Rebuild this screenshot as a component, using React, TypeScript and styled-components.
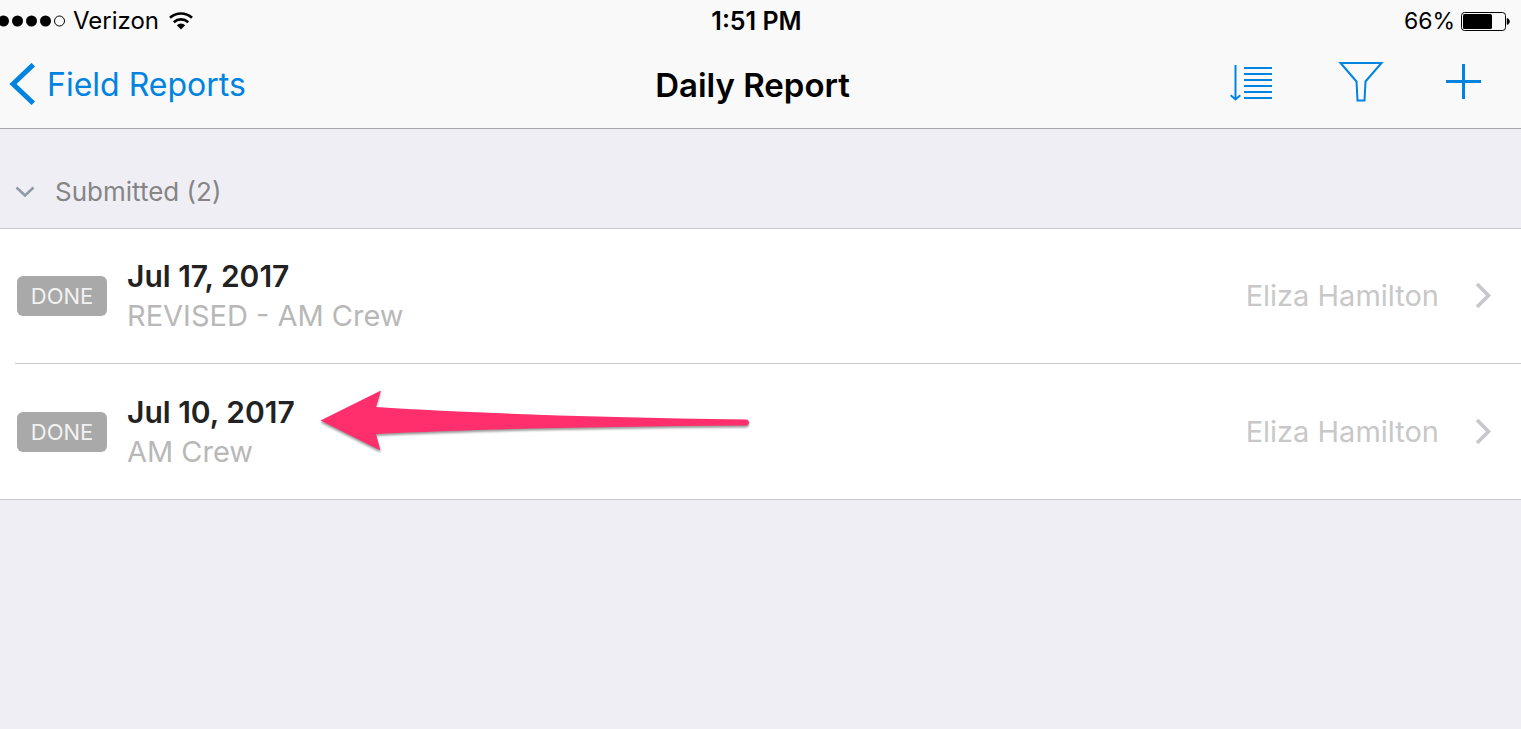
import React from "react";
import styled, { createGlobalStyle } from "styled-components";

const blue = "#0084e0";

const GlobalStyle = createGlobalStyle`
  * { box-sizing: border-box; }
  body {
    margin: 0;
    background: #efeef4;
    font-family: Inter, "Liberation Sans", sans-serif;
    color: #000;
  }
`;

const Header = styled.header`
  background: #f9f9f9;
  border-bottom: 1px solid #a7a7ae;
`;

const StatusBar = styled.div`
  display: grid;
  grid-template-columns: 1fr auto 1fr;
  align-items: center;
  height: 41px;
  padding-right: 10px;
  font-size: 24px;
  line-height: 42px;
`;

const StatusGroup = styled.div<{ $end?: boolean }>`
  display: flex;
  align-items: center;
  justify-content: ${(p) => (p.$end ? "flex-end" : "flex-start")};
`;

const Carrier = styled.span`
  margin: 0 10px 0 7px;
`;

const Time = styled.time`
  padding-left: 2px;
  font-size: 25px;
  font-weight: 600;
`;

const BatteryLevel = styled.span`
  margin-right: 6px;
  font-size: 23px;
`;

const NavBar = styled.nav`
  display: grid;
  grid-template-columns: 1fr auto 1fr;
  align-items: center;
  height: 87px;
  padding: 0 25px 0 9px;
`;

const BackLink = styled.a`
  display: flex;
  align-items: center;
  gap: 11px;
  color: ${blue};
  font-size: 32px;
  line-height: 40px;
  text-decoration: none;
`;

const Title = styled.h1`
  margin: 0;
  font-size: 33px;
  font-weight: 600;
  line-height: 40px;
`;

const Actions = styled.div`
  display: flex;
  justify-content: flex-end;
  gap: 40px;
  padding-bottom: 6px;
`;

const IconButton = styled.button`
  display: flex;
  align-items: center;
  justify-content: center;
  width: 66px;
  height: 56px;
  padding: 0;
  border: 0;
  background: none;
  color: ${blue};
`;

const SectionToggle = styled.button`
  display: flex;
  align-items: center;
  gap: 20px;
  width: 100%;
  height: 99px;
  padding: 26px 15px 0;
  border: 0;
  background: none;
  color: #858585;
  font: inherit;
  font-size: 26px;
  text-align: left;
`;

const ReportList = styled.ul`
  margin: 0;
  padding: 0;
  list-style: none;
  background: #fff;
  border-top: 1px solid #c8c7cc;
  border-bottom: 1px solid #c8c7cc;
`;

const ReportItem = styled.li`
  position: relative;
  padding-left: 15px;
`;

const ReportLink = styled.a`
  display: flex;
  align-items: center;
  min-height: 135px;
  padding: 0 29px 0 2px;
  color: inherit;
  text-decoration: none;

  ${ReportItem}:not(:last-child) > & {
    border-bottom: 1px solid #c8c7cc;
  }
`;

const Badge = styled.span`
  width: 90px;
  margin-right: 20px;
  border-radius: 6px;
  background: #a9a9a9;
  color: #f2f2f2;
  font-size: 22px;
  line-height: 40px;
  text-align: center;
`;

const Summary = styled.div`
  flex: 1;
  line-height: 40px;
`;

const ReportDate = styled.div`
  color: #222;
  font-size: 30px;
  font-weight: 600;
`;

const Crew = styled.div`
  color: #b8b8b8;
  font-size: 29px;
`;

const Author = styled.span`
  margin-right: 36px;
  color: #c8c8c8;
  font-size: 29px;
  line-height: 40px;
`;

const Pointer = styled.svg`
  position: absolute;
  top: 20px;
  left: 316px;
  pointer-events: none;
  filter: drop-shadow(0 2px 1px rgba(0, 0, 0, 0.4));
`;

const SignalDots = () => (
  <svg width="66" height="12" viewBox="0 0 66 12" aria-hidden="true">
    {[3.5, 17.5, 31.5, 45.5].map((x) => (
      <circle key={x} cx={x} cy="6" r="5.5" />
    ))}
    <circle cx="59.5" cy="6" r="5" fill="none" stroke="#000" />
  </svg>
);

const Wifi = () => (
  <svg width="24" height="18" viewBox="0 0 24 18" aria-hidden="true">
    <g fill="none" stroke="#000" strokeWidth="2.7">
      <path d="M1 5.700a16.500 16.500 0 0 1 22 0" />
      <path d="M4.800 10.200a10.800 10.800 0 0 1 14.400 0" />
    </g>
    <path d="M7.800 13.200a6.200 6.200 0 0 1 8.400 0L12 17.500z" />
  </svg>
);

const Battery = () => (
  <svg width="50" height="20" viewBox="0 0 50 20" aria-hidden="true">
    <rect x="0.5" y="1.5" width="44" height="18" rx="3" fill="none" stroke="#000" />
    <rect x="2" y="3" width="29" height="15" rx="1.500" />
    <path d="M46 7.500c3.400.400 3.400 5.600 0 6z" stroke="#000" strokeWidth="0.500" />
  </svg>
);

const BackChevron = () => (
  <svg width="27" height="43" viewBox="0 0 27 43" fill="none" aria-hidden="true">
    <path d="M24.300 1.700L4 21l20.300 19.300" stroke="currentColor" strokeWidth="5" />
  </svg>
);

const SortIcon = () => (
  <svg width="44" height="40" viewBox="0 0 44 40" fill="none" stroke="currentColor" strokeWidth="2" aria-hidden="true">
    <path d="M6.500 3v34M1.700 33.200l4.800 4.300 4.800-4.300" />
    <path d="M15 6h28M15 12h28M15 18h28M15 24h28M15 30h28M15 36h28" />
  </svg>
);

const FilterIcon = () => (
  <svg width="54" height="42" viewBox="-8 0 54 42" fill="none" stroke="currentColor" strokeWidth="2" aria-hidden="true">
    <path d="M2.500 2h41L27.500 20.500l-1 19h-7l-1-19z" />
  </svg>
);

const PlusIcon = () => (
  <svg width="35" height="35" viewBox="0 0 35 35" stroke="currentColor" strokeWidth="3" aria-hidden="true">
    <path d="M17.500 0v35M0 17.500h35" />
  </svg>
);

const ExpandedChevron = () => (
  <svg width="20" height="12" viewBox="0 0 20 12" fill="none" aria-hidden="true">
    <path d="M1.500 1.500l8.500 8 8.500-8" stroke="#8c9ba5" strokeWidth="2.500" />
  </svg>
);

const RowChevron = () => (
  <svg width="17" height="26" viewBox="0 0 17 26" fill="none" aria-hidden="true">
    <path d="M2 1L13.500 12.500 2 24" stroke="#c7c7cc" strokeWidth="3.600" />
  </svg>
);

const reports = [
  { date: "Jul 17, 2017", crew: "REVISED - AM Crew", author: "Eliza Hamilton" },
  { date: "Jul 10, 2017", crew: "AM Crew", author: "Eliza Hamilton", pointed: true },
];

export default function App() {
  return (
    <>
      <GlobalStyle />
      <Header>
        <StatusBar>
          <StatusGroup>
            <SignalDots />
            <Carrier>Verizon</Carrier>
            <Wifi />
          </StatusGroup>
          <Time>1:51 PM</Time>
          <StatusGroup $end>
            <BatteryLevel>66%</BatteryLevel>
            <Battery />
          </StatusGroup>
        </StatusBar>
        <NavBar>
          <BackLink href="#field-reports">
            <BackChevron />
            Field Reports
          </BackLink>
          <Title>Daily Report</Title>
          <Actions>
            <IconButton type="button" aria-label="Sort">
              <SortIcon />
            </IconButton>
            <IconButton type="button" aria-label="Filter">
              <FilterIcon />
            </IconButton>
            <IconButton type="button" aria-label="Add report">
              <PlusIcon />
            </IconButton>
          </Actions>
        </NavBar>
      </Header>
      <main>
        <SectionToggle type="button" aria-expanded="true">
          <ExpandedChevron />
          Submitted (2)
        </SectionToggle>
        <ReportList>
          {reports.map((report) => (
            <ReportItem key={report.date}>
              <ReportLink href="#report">
                <Badge>DONE</Badge>
                <Summary>
                  <ReportDate>{report.date}</ReportDate>
                  <Crew>{report.crew}</Crew>
                </Summary>
                <Author>{report.author}</Author>
                <RowChevron />
              </ReportLink>
              {report.pointed && (
                <Pointer width="440" height="72" viewBox="0 0 440 72" aria-hidden="true">
                  <path
                    fill="#ff2f6d"
                    d="M4.500 36.500L65 6.500l-5 16.500Q200 32 430 35.500q3 .3 3 3t-3 3Q200 43 60 50l4.500 16.500z"
                  />
                </Pointer>
              )}
            </ReportItem>
          ))}
        </ReportList>
      </main>
    </>
  );
}
